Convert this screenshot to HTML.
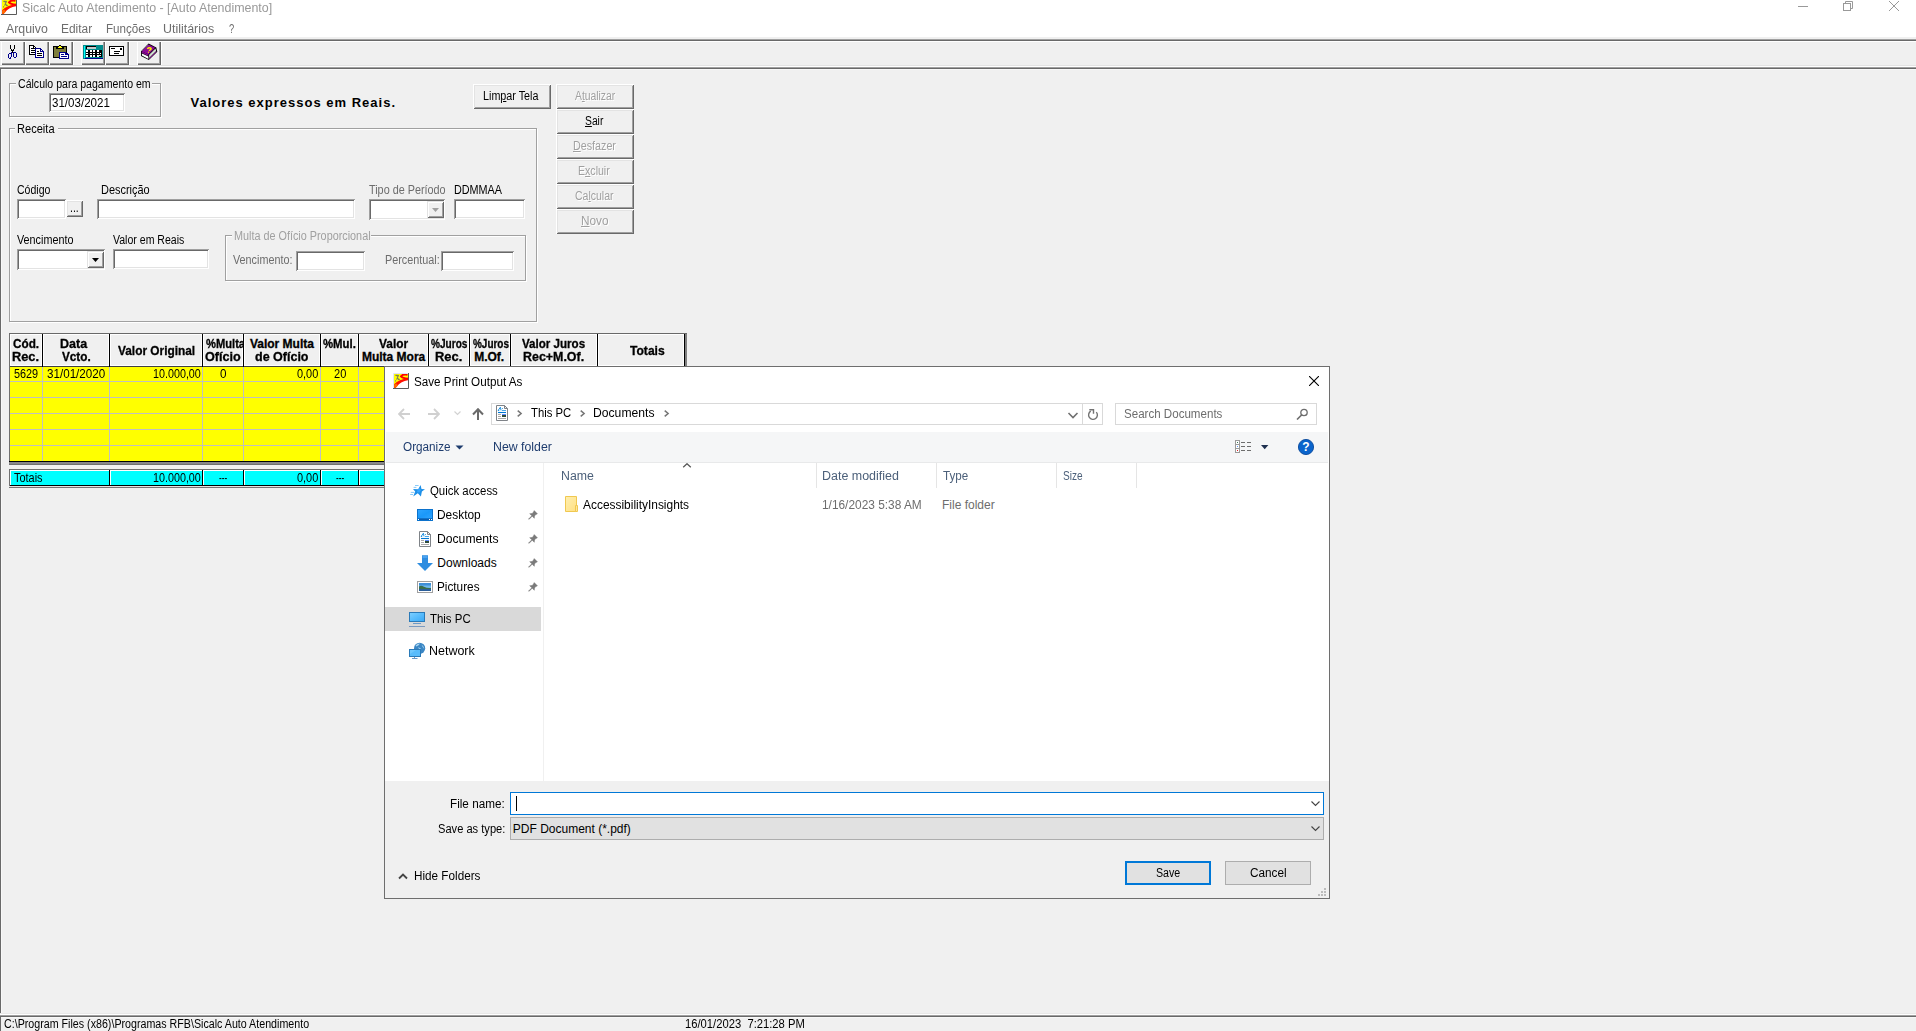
<!DOCTYPE html>
<html><head><meta charset="utf-8"><title>Sicalc Auto Atendimento</title><style>
html,body{margin:0;padding:0}
body{width:1916px;height:1031px;overflow:hidden;background:#f0f0f0;position:relative;font-family:'Liberation Sans',sans-serif;}
#root{position:absolute;left:0;top:0;width:1916px;height:1031px;overflow:hidden}
#root div,#root svg,#root span{position:absolute}
.t{white-space:pre;line-height:1;transform-origin:0 0;color:#000}
u{text-decoration:underline;text-underline-offset:1px}
</style></head><body><div id="root">
<div style="left:0px;top:0px;width:1916px;height:37px;background:#fff;"></div>
<svg style="left:1px;top:-1px;" width="16" height="16" viewBox="0 0 16 16"><rect width="16" height="16" fill="#fff"/><path d="M1 1H15V6.3Q7 7.5 1 13Z" fill="#ffff00"/><path d="M1 15.5V11.2Q6 6.8 15 4.8V7.2Q8 8.2 4 13.2L2.2 15.5Z" fill="#ff1000"/><path d="M1 15V11.5L3.5 10.5L5 12.5L3 14.5Z" fill="#ff6a00"/><path d="M14.5 1.8Q10 0.8 8 3.4Q9.5 5.3 15 5.7" fill="none" stroke="#ff0000" stroke-width="2"/><path d="M2.4 2.4H4.2V3.6M5.6 2L3.6 6.6M4.6 5.4L6.2 6.4L5 6.8M2.6 7.2V8.4" fill="none" stroke="#7f7f55" stroke-width="1.1"/><path d="M0.5 16V0.5H16" fill="none" stroke="#e2e2f8"/><path d="M15.5 0V15.5H0" fill="none" stroke="#5a5a5a"/></svg>
<span class="t" style="left:22.0px;top:2px;font-size:12px;color:#999;transform:scaleX(1.036);">Sicalc Auto Atendimento - [Auto Atendimento]</span>
<svg style="left:1798px;top:0px;" width="10" height="12" viewBox="0 0 10 12"><path d="M0 6.5H10" stroke="#999" stroke-width="1"/></svg>
<svg style="left:1843px;top:0px;" width="11" height="12" viewBox="0 0 11 12"><path d="M2.5 3V1.5H9.5V8.5H8" fill="none" stroke="#999"/><rect x="0.5" y="3.5" width="7" height="7" fill="none" stroke="#999"/></svg>
<svg style="left:1889px;top:0px;" width="11" height="12" viewBox="0 0 11 12"><path d="M0 1L10 11M10 1L0 11" stroke="#999" stroke-width="1"/></svg>
<span class="t" style="left:6.3px;top:23px;font-size:12px;color:#6d6d6d;transform:scaleX(1.026);">Arquivo</span>
<span class="t" style="left:61.0px;top:23px;font-size:12px;color:#6d6d6d;transform:scaleX(0.992);">Editar</span>
<span class="t" style="left:105.5px;top:23px;font-size:12px;color:#6d6d6d;transform:scaleX(0.969);">Funções</span>
<span class="t" style="left:163.0px;top:23px;font-size:12px;color:#6d6d6d;transform:scaleX(1.037);">Utilitários</span>
<span class="t" style="left:228.6px;top:23px;font-size:12px;color:#6d6d6d;transform:scaleX(0.783);">?</span>
<div style="left:0px;top:37px;width:1916px;height:2px;background:#f0f0f0;"></div>
<div style="left:0px;top:39px;width:1916px;height:1px;background:#a0a0a0;"></div>
<div style="left:0px;top:40px;width:1916px;height:1px;background:#696969;"></div>
<div style="left:0px;top:41px;width:1916px;height:1px;background:#fff;"></div>
<div style="left:0px;top:42px;width:1916px;height:23px;background:#f0f0f0;"></div>
<div style="left:0px;top:65px;width:1916px;height:1px;background:#e3e3e3;"></div>
<div style="left:0px;top:66px;width:1916px;height:1px;background:#fff;"></div>
<div style="left:0px;top:67px;width:1916px;height:1px;background:#a0a0a0;"></div>
<div style="left:0px;top:68px;width:1916px;height:1px;background:#696969;"></div>
<div style="left:73px;top:41px;width:1px;height:24px;background:#fff;"></div>
<div style="left:129px;top:41px;width:1px;height:24px;background:#fff;"></div>
<div style="left:161px;top:41px;width:1px;height:24px;background:#fff;"></div>
<div style="left:1px;top:41px;width:24px;height:24px;background:#f0f0f0;box-shadow:inset 1px 1px 0 #fff,inset -1px -1px 0 #696969,inset -2px -2px 0 #a0a0a0;"></div>
<div style="left:25px;top:41px;width:24px;height:24px;background:#f0f0f0;box-shadow:inset 1px 1px 0 #fff,inset -1px -1px 0 #696969,inset -2px -2px 0 #a0a0a0;"></div>
<div style="left:49px;top:41px;width:24px;height:24px;background:#f0f0f0;box-shadow:inset 1px 1px 0 #fff,inset -1px -1px 0 #696969,inset -2px -2px 0 #a0a0a0;"></div>
<div style="left:81px;top:41px;width:24px;height:24px;background:#f0f0f0;box-shadow:inset 1px 1px 0 #fff,inset -1px -1px 0 #696969,inset -2px -2px 0 #a0a0a0;"></div>
<div style="left:105px;top:41px;width:24px;height:24px;background:#f0f0f0;box-shadow:inset 1px 1px 0 #fff,inset -1px -1px 0 #696969,inset -2px -2px 0 #a0a0a0;"></div>
<div style="left:137px;top:41px;width:24px;height:24px;background:#f0f0f0;box-shadow:inset 1px 1px 0 #fff,inset -1px -1px 0 #696969,inset -2px -2px 0 #a0a0a0;"></div>
<svg style="left:0;top:40px" width="180" height="26" viewBox="0 40 180 26"><g shape-rendering="crispEdges"><rect x="10" y="45" width="1" height="4" fill="#000"/><rect x="14" y="45" width="1" height="4" fill="#000"/><rect x="11" y="49" width="1" height="2" fill="#000"/><rect x="13" y="49" width="1" height="2" fill="#000"/><rect x="12" y="50" width="1" height="3" fill="#000"/><rect x="11" y="52" width="1" height="2" fill="#00008b"/><rect x="13" y="52" width="1" height="1" fill="#00008b"/><rect x="9" y="53" width="2" height="1" fill="#00008b"/><rect x="8" y="54" width="1" height="4" fill="#00008b"/><rect x="11" y="54" width="1" height="3" fill="#00008b"/><rect x="9" y="58" width="2" height="1" fill="#00008b"/><rect x="10" y="57" width="1" height="1" fill="#00008b"/><rect x="14" y="52" width="2" height="1" fill="#00008b"/><rect x="13" y="53" width="1" height="4" fill="#00008b"/><rect x="16" y="53" width="1" height="4" fill="#00008b"/><rect x="14" y="57" width="2" height="1" fill="#00008b"/></g><g shape-rendering="crispEdges"><path d="M29.5 45.5H33.5L36.5 48.5V54.5H29.5Z" fill="#fff" stroke="#000"/><path d="M33.5 45.5V48.5H36.5" fill="none" stroke="#000"/><rect x="31" y="48" width="2" height="1" fill="#000"/><rect x="31" y="50" width="4" height="1" fill="#000"/><rect x="31" y="52" width="4" height="1" fill="#000"/><path d="M35.5 48.5H40.5L43.5 51.5V57.5H35.5Z" fill="#fff" stroke="#00008b"/><path d="M40.5 48.5V51.5H43.5" fill="none" stroke="#00008b"/><rect x="37" y="51" width="2" height="1" fill="#000"/><rect x="37" y="53" width="5" height="1" fill="#000"/><rect x="37" y="55" width="5" height="1" fill="#000"/></g><g shape-rendering="crispEdges"><rect x="53.5" y="46.5" width="13" height="11" fill="#7d7d3a" stroke="#000"/><path d="M56.5 48.5V47.5H58.5L59.5 45.5H60.5L61.5 47.5H63.5V48.5Z" fill="#e8e8d0" stroke="#000"/><rect x="59" y="46" width="2" height="1" fill="#ffff00"/><rect x="58" y="47" width="4" height="1" fill="#ffff00"/><path d="M59.5 52.5H65.5L68.5 54.5V58.5H59.5Z" fill="#fff" stroke="#00008b"/><path d="M65.5 52.5V54.5H68.5" fill="none" stroke="#00008b"/><rect x="61" y="54" width="3" height="1" fill="#00008b"/><rect x="61" y="56" width="6" height="1" fill="#00008b"/></g><g shape-rendering="crispEdges"><rect x="83" y="45" width="20" height="13" fill="#008b8b"/><rect x="84" y="46" width="1" height="12" fill="#00ffff"/><rect x="85" y="58" width="18" height="1" fill="#00008b"/><rect x="83" y="58" width="2" height="1" fill="#008b8b"/><rect x="86" y="46" width="10" height="1" fill="#000"/><rect x="86" y="47" width="1" height="2" fill="#000"/><rect x="87" y="47" width="9" height="2" fill="#c8c8c8"/><rect x="86" y="50" width="16" height="7" fill="#000"/><rect x="86" y="50" width="2" height="2" fill="#fff"/><rect x="86" y="53" width="2" height="1" fill="#fff"/><rect x="86" y="55" width="2" height="2" fill="#fff"/><rect x="90" y="50" width="2" height="2" fill="#fff"/><rect x="90" y="53" width="2" height="1" fill="#fff"/><rect x="90" y="55" width="2" height="2" fill="#fff"/><rect x="93" y="50" width="2" height="2" fill="#fff"/><rect x="93" y="53" width="2" height="1" fill="#fff"/><rect x="93" y="55" width="2" height="2" fill="#fff"/><rect x="97" y="50" width="2" height="2" fill="#fff"/><rect x="97" y="53" width="2" height="1" fill="#fff"/><rect x="97" y="55" width="2" height="2" fill="#fff"/><rect x="100" y="53" width="1" height="1" fill="#fff"/><rect x="98" y="55" width="3" height="1" fill="#d8d8d8"/></g><g shape-rendering="crispEdges"><rect x="109.5" y="46.5" width="14" height="9" fill="#fff" stroke="#000"/><rect x="111" y="48" width="4" height="1" fill="#000"/><rect x="120" y="48" width="2" height="2" fill="#000"/><rect x="114" y="51" width="6" height="1" fill="#000"/><rect x="114" y="53" width="5" height="1" fill="#000"/></g><path d="M141 51.2L148.6 43.6L156.3 47.4L157.3 51.8L148.8 60.1L141 56Z" fill="#000"/><path d="M141.7 51.2L148.6 44.5L155.2 47.8L148.4 54.4Z" fill="#8c0a96"/><path d="M141.7 51.2L148.4 54.4V56L141.7 52.8Z" fill="#8c0a96"/><path d="M141.9 53.4L148.4 56.5V58.9L141.9 55.5Z" fill="#fff"/><path d="M149.1 54.7L155.5 48.5L156.1 51L149.1 58Z" fill="#d4dcd4"/><path d="M149 58.9L156.5 51.6" stroke="#8c0a96" stroke-width="0.9" fill="none"/><path d="M142.5 50.3L148.3 44.8" stroke="#cdbdd5" stroke-width="0.8" stroke-dasharray="0.7 0.9" fill="none"/><path d="M147.3 48.9Q148.6 47.3 150.7 48Q151.7 48.9 150.3 49.9L148.9 50.7M148 52.1L148.9 52.4" fill="none" stroke="#ffee00" stroke-width="1.5"/></svg>
<div style="left:0px;top:69px;width:1px;height:944px;background:#696969;"></div>
<div style="left:1px;top:70px;width:1px;height:943px;background:#f8f8f8;"></div>
<div style="left:1px;top:69px;width:1915px;height:1px;background:#f8f8f8;"></div>
<div style="left:0px;top:1013px;width:1916px;height:1px;background:#e8e8e8;"></div>
<div style="left:0px;top:1014px;width:1916px;height:1px;background:#fff;"></div>
<div style="left:0px;top:1015px;width:1916px;height:1px;background:#a0a0a0;"></div>
<div style="left:0px;top:1016px;width:1916px;height:1px;background:#696969;"></div>
<div style="left:0px;top:1017px;width:1px;height:14px;background:#696969;"></div>
<div style="left:1px;top:1017px;width:1915px;height:1px;background:#f8f8f8;"></div>
<span class="t" style="left:3.8px;top:1018px;font-size:12px;transform:scaleX(0.890);">C:\Program Files (x86)\Programas RFB\Sicalc Auto Atendimento</span>
<span class="t" style="left:684.5px;top:1018px;font-size:12px;transform:scaleX(0.935);">16/01/2023  7:21:28 PM</span>
<div style="left:10px;top:84px;width:152px;height:34px;border:1px solid #fff;box-sizing:border-box;"></div>
<div style="left:9px;top:83px;width:152px;height:34px;border:1px solid #a0a0a0;box-sizing:border-box;"></div>
<div style="left:16px;top:78px;width:136px;height:12px;background:#f0f0f0;"></div>
<span class="t" style="left:18.0px;top:78px;font-size:12px;transform:scaleX(0.880);">Cálculo para pagamento em</span>
<div style="left:49px;top:93px;width:76px;height:19px;background:#fff;box-shadow:inset 1px 1px 0 #a0a0a0,inset -1px -1px 0 #fff,inset 2px 2px 0 #696969,inset -2px -2px 0 #e3e3e3;"></div>
<span class="t" style="left:52.1px;top:97px;font-size:12px;transform:scaleX(0.963);">31/03/2021</span>
<span class="t" style="left:190.5px;top:96px;font-size:13px;font-weight:700;letter-spacing:1px">Valores expressos em Reais.</span>
<div style="left:473px;top:84px;width:78px;height:25px;background:#f0f0f0;box-shadow:inset 1px 1px 0 #fff,inset -1px -1px 0 #696969,inset 2px 2px 0 #e3e3e3,inset -2px -2px 0 #a0a0a0;"></div>
<span class="t" style="left:483.4px;top:90px;font-size:12px;transform:scaleX(0.897);">Lim<u>p</u>ar Tela</span>
<div style="left:556px;top:84px;width:78px;height:25px;background:#f0f0f0;box-shadow:inset 1px 1px 0 #fff,inset -1px -1px 0 #696969,inset 2px 2px 0 #e3e3e3,inset -2px -2px 0 #a0a0a0;"></div>
<span class="t" style="left:574.5px;top:90px;font-size:12px;color:#a0a0a0;transform:scaleX(0.860);text-shadow:1px 1px 0 #fff;">A<u>t</u>ualizar</span>
<div style="left:556px;top:109px;width:78px;height:25px;background:#f0f0f0;box-shadow:inset 1px 1px 0 #fff,inset -1px -1px 0 #696969,inset 2px 2px 0 #e3e3e3,inset -2px -2px 0 #a0a0a0;"></div>
<span class="t" style="left:585.2px;top:115px;font-size:12px;transform:scaleX(0.858);"><u>S</u>air</span>
<div style="left:556px;top:134px;width:78px;height:25px;background:#f0f0f0;box-shadow:inset 1px 1px 0 #fff,inset -1px -1px 0 #696969,inset 2px 2px 0 #e3e3e3,inset -2px -2px 0 #a0a0a0;"></div>
<span class="t" style="left:572.7px;top:140px;font-size:12px;color:#a0a0a0;transform:scaleX(0.894);text-shadow:1px 1px 0 #fff;"><u>D</u>esfazer</span>
<div style="left:556px;top:159px;width:78px;height:25px;background:#f0f0f0;box-shadow:inset 1px 1px 0 #fff,inset -1px -1px 0 #696969,inset 2px 2px 0 #e3e3e3,inset -2px -2px 0 #a0a0a0;"></div>
<span class="t" style="left:578.3px;top:165px;font-size:12px;color:#a0a0a0;transform:scaleX(0.881);text-shadow:1px 1px 0 #fff;">E<u>x</u>cluir</span>
<div style="left:556px;top:184px;width:78px;height:25px;background:#f0f0f0;box-shadow:inset 1px 1px 0 #fff,inset -1px -1px 0 #696969,inset 2px 2px 0 #e3e3e3,inset -2px -2px 0 #a0a0a0;"></div>
<span class="t" style="left:575.2px;top:190px;font-size:12px;color:#a0a0a0;transform:scaleX(0.874);text-shadow:1px 1px 0 #fff;">Ca<u>l</u>cular</span>
<div style="left:556px;top:209px;width:78px;height:25px;background:#f0f0f0;box-shadow:inset 1px 1px 0 #fff,inset -1px -1px 0 #696969,inset 2px 2px 0 #e3e3e3,inset -2px -2px 0 #a0a0a0;"></div>
<span class="t" style="left:580.5px;top:215px;font-size:12px;color:#a0a0a0;transform:scaleX(0.981);text-shadow:1px 1px 0 #fff;"><u>N</u>ovo</span>
<div style="left:10px;top:129px;width:528px;height:194px;border:1px solid #fff;box-sizing:border-box;"></div>
<div style="left:9px;top:128px;width:528px;height:194px;border:1px solid #a0a0a0;box-sizing:border-box;"></div>
<div style="left:15px;top:123px;width:43px;height:12px;background:#f0f0f0;"></div>
<span class="t" style="left:17.4px;top:123px;font-size:12px;transform:scaleX(0.923);">Receita</span>
<span class="t" style="left:17.1px;top:184px;font-size:12px;transform:scaleX(0.878);">Código</span>
<div style="left:17px;top:199px;width:49px;height:20px;background:#fff;box-shadow:inset 1px 1px 0 #a0a0a0,inset -1px -1px 0 #fff,inset 2px 2px 0 #696969,inset -2px -2px 0 #e3e3e3;"></div>
<div style="left:66px;top:200px;width:17px;height:17px;background:#f0f0f0;box-shadow:inset 1px 1px 0 #fff,inset -1px -1px 0 #696969,inset 2px 2px 0 #e3e3e3,inset -2px -2px 0 #a0a0a0;"></div>
<span class="t" style="left:70.1px;top:202px;font-size:12px;transform:scaleX(0.875);">...</span>
<span class="t" style="left:100.6px;top:184px;font-size:12px;transform:scaleX(0.913);">Descrição</span>
<div style="left:97px;top:199px;width:258px;height:20px;background:#fff;box-shadow:inset 1px 1px 0 #a0a0a0,inset -1px -1px 0 #fff,inset 2px 2px 0 #696969,inset -2px -2px 0 #e3e3e3;"></div>
<span class="t" style="left:368.6px;top:184px;font-size:12px;color:#6d6d6d;transform:scaleX(0.902);">Tipo de Período</span>
<div style="left:369px;top:199px;width:76px;height:21px;background:#fff;box-shadow:inset 1px 1px 0 #a0a0a0,inset -1px -1px 0 #fff,inset 2px 2px 0 #696969,inset -2px -2px 0 #e3e3e3;"></div>
<div style="left:427px;top:201px;width:17px;height:17px;background:#f0f0f0;box-shadow:inset 1px 1px 0 #e3e3e3,inset -1px -1px 0 #696969,inset 2px 2px 0 #fff,inset -2px -2px 0 #a0a0a0;"></div>
<svg style="left:432px;top:208px;" width="7" height="4" viewBox="0 0 7 4"><path d="M0 0H7L3.5 4Z" fill="#a0a0a0"/></svg>
<span class="t" style="left:454.1px;top:184px;font-size:12px;transform:scaleX(0.900);">DDMMAA</span>
<div style="left:454px;top:199px;width:71px;height:20px;background:#fff;box-shadow:inset 1px 1px 0 #a0a0a0,inset -1px -1px 0 #fff,inset 2px 2px 0 #696969,inset -2px -2px 0 #e3e3e3;"></div>
<span class="t" style="left:17.0px;top:234px;font-size:12px;transform:scaleX(0.900);">Vencimento</span>
<div style="left:17px;top:249px;width:88px;height:21px;background:#fff;box-shadow:inset 1px 1px 0 #a0a0a0,inset -1px -1px 0 #fff,inset 2px 2px 0 #696969,inset -2px -2px 0 #e3e3e3;"></div>
<div style="left:87px;top:251px;width:17px;height:17px;background:#f0f0f0;box-shadow:inset 1px 1px 0 #e3e3e3,inset -1px -1px 0 #696969,inset 2px 2px 0 #fff,inset -2px -2px 0 #a0a0a0;"></div>
<svg style="left:92px;top:258px;" width="7" height="4" viewBox="0 0 7 4"><path d="M0 0H7L3.5 4Z" fill="#000"/></svg>
<span class="t" style="left:113.0px;top:234px;font-size:12px;transform:scaleX(0.879);">Valor em Reais</span>
<div style="left:113px;top:249px;width:96px;height:20px;background:#fff;box-shadow:inset 1px 1px 0 #a0a0a0,inset -1px -1px 0 #fff,inset 2px 2px 0 #696969,inset -2px -2px 0 #e3e3e3;"></div>
<div style="left:226px;top:236px;width:301px;height:46px;border:1px solid #fff;box-sizing:border-box;"></div>
<div style="left:225px;top:235px;width:301px;height:46px;border:1px solid #a0a0a0;box-sizing:border-box;"></div>
<div style="left:232px;top:230px;width:139px;height:12px;background:#f0f0f0;"></div>
<span class="t" style="left:233.6px;top:230px;font-size:12px;color:#a0a0a0;transform:scaleX(0.902);">Multa de Ofício Proporcional</span>
<span class="t" style="left:232.7px;top:254px;font-size:12px;color:#6d6d6d;transform:scaleX(0.900);">Vencimento:</span>
<div style="left:296px;top:251px;width:69px;height:20px;background:#fff;box-shadow:inset 1px 1px 0 #a0a0a0,inset -1px -1px 0 #fff,inset 2px 2px 0 #696969,inset -2px -2px 0 #e3e3e3;"></div>
<span class="t" style="left:384.6px;top:254px;font-size:12px;color:#6d6d6d;transform:scaleX(0.902);">Percentual:</span>
<div style="left:441px;top:251px;width:73px;height:20px;background:#fff;box-shadow:inset 1px 1px 0 #a0a0a0,inset -1px -1px 0 #fff,inset 2px 2px 0 #696969,inset -2px -2px 0 #e3e3e3;"></div>
<div style="left:9px;top:333px;width:678px;height:1px;background:#696969;"></div>
<div style="left:9px;top:334px;width:1px;height:131px;background:#707070;"></div>
<div style="left:10px;top:334px;width:674px;height:32px;background:#f0f0f0;"></div>
<div style="left:10px;top:334px;width:674px;height:1px;background:#fff;"></div>
<div style="left:10px;top:365px;width:674px;height:1px;background:#fff;"></div>
<div style="left:10px;top:334px;width:1px;height:32px;background:#fff;"></div>
<div style="left:10px;top:366px;width:675px;height:1px;background:#404040;"></div>
<div style="left:41px;top:334px;width:1px;height:32px;background:#fff;"></div>
<div style="left:43px;top:334px;width:1px;height:32px;background:#fff;"></div>
<div style="left:42px;top:334px;width:1px;height:33px;background:#000;"></div>
<div style="left:108px;top:334px;width:1px;height:32px;background:#fff;"></div>
<div style="left:110px;top:334px;width:1px;height:32px;background:#fff;"></div>
<div style="left:109px;top:334px;width:1px;height:33px;background:#000;"></div>
<div style="left:201px;top:334px;width:1px;height:32px;background:#fff;"></div>
<div style="left:203px;top:334px;width:1px;height:32px;background:#fff;"></div>
<div style="left:202px;top:334px;width:1px;height:33px;background:#000;"></div>
<div style="left:242px;top:334px;width:1px;height:32px;background:#fff;"></div>
<div style="left:244px;top:334px;width:1px;height:32px;background:#fff;"></div>
<div style="left:243px;top:334px;width:1px;height:33px;background:#000;"></div>
<div style="left:319px;top:334px;width:1px;height:32px;background:#fff;"></div>
<div style="left:321px;top:334px;width:1px;height:32px;background:#fff;"></div>
<div style="left:320px;top:334px;width:1px;height:33px;background:#000;"></div>
<div style="left:357px;top:334px;width:1px;height:32px;background:#fff;"></div>
<div style="left:359px;top:334px;width:1px;height:32px;background:#fff;"></div>
<div style="left:358px;top:334px;width:1px;height:33px;background:#000;"></div>
<div style="left:427px;top:334px;width:1px;height:32px;background:#fff;"></div>
<div style="left:429px;top:334px;width:1px;height:32px;background:#fff;"></div>
<div style="left:428px;top:334px;width:1px;height:33px;background:#000;"></div>
<div style="left:468px;top:334px;width:1px;height:32px;background:#fff;"></div>
<div style="left:470px;top:334px;width:1px;height:32px;background:#fff;"></div>
<div style="left:469px;top:334px;width:1px;height:33px;background:#000;"></div>
<div style="left:509px;top:334px;width:1px;height:32px;background:#fff;"></div>
<div style="left:511px;top:334px;width:1px;height:32px;background:#fff;"></div>
<div style="left:510px;top:334px;width:1px;height:33px;background:#000;"></div>
<div style="left:596px;top:334px;width:1px;height:32px;background:#fff;"></div>
<div style="left:598px;top:334px;width:1px;height:32px;background:#fff;"></div>
<div style="left:597px;top:334px;width:1px;height:33px;background:#000;"></div>
<div style="left:683px;top:334px;width:1px;height:32px;background:#fff;"></div>
<div style="left:684px;top:334px;width:1px;height:33px;background:#000;"></div>
<div style="left:685px;top:334px;width:2px;height:33px;background:#808080;"></div>
<div style="left:10px;top:367px;width:676px;height:94px;background:#ffff00;"></div>
<div style="left:10px;top:381px;width:676px;height:1px;background:#c0c0c0;"></div>
<div style="left:10px;top:397px;width:676px;height:1px;background:#c0c0c0;"></div>
<div style="left:10px;top:413px;width:676px;height:1px;background:#c0c0c0;"></div>
<div style="left:10px;top:429px;width:676px;height:1px;background:#c0c0c0;"></div>
<div style="left:10px;top:445px;width:676px;height:1px;background:#c0c0c0;"></div>
<div style="left:42px;top:367px;width:1px;height:94px;background:#c0c0c0;"></div>
<div style="left:109px;top:367px;width:1px;height:94px;background:#c0c0c0;"></div>
<div style="left:202px;top:367px;width:1px;height:94px;background:#c0c0c0;"></div>
<div style="left:243px;top:367px;width:1px;height:94px;background:#c0c0c0;"></div>
<div style="left:320px;top:367px;width:1px;height:94px;background:#c0c0c0;"></div>
<div style="left:358px;top:367px;width:1px;height:94px;background:#c0c0c0;"></div>
<div style="left:428px;top:367px;width:1px;height:94px;background:#c0c0c0;"></div>
<div style="left:469px;top:367px;width:1px;height:94px;background:#c0c0c0;"></div>
<div style="left:510px;top:367px;width:1px;height:94px;background:#c0c0c0;"></div>
<div style="left:597px;top:367px;width:1px;height:94px;background:#c0c0c0;"></div>
<div style="left:9px;top:461px;width:677px;height:1px;background:#000;"></div>
<div style="left:9px;top:462px;width:677px;height:2px;background:#888888;"></div>
<div style="left:9px;top:464px;width:677px;height:1px;background:#707070;"></div>
<span class="t" style="left:13.0px;top:338px;font-size:12px;font-weight:700;-webkit-text-stroke:0.3px #000;transform:scaleX(0.978);">Cód.</span>
<span class="t" style="left:12.1px;top:351px;font-size:12px;font-weight:700;-webkit-text-stroke:0.3px #000;transform:scaleX(1.065);">Rec.</span>
<span class="t" style="left:60.0px;top:338px;font-size:12px;font-weight:700;-webkit-text-stroke:0.3px #000;transform:scaleX(1.042);">Data</span>
<span class="t" style="left:62.3px;top:351px;font-size:12px;font-weight:700;-webkit-text-stroke:0.3px #000;transform:scaleX(0.979);">Vcto.</span>
<span class="t" style="left:117.8px;top:345px;font-size:12px;font-weight:700;-webkit-text-stroke:0.3px #000;transform:scaleX(0.989);">Valor Original</span>
<div style="left:203px;top:336px;width:40px;height:16px;overflow:hidden"><span class="t" style="left:2.7px;top:2px;font-size:12px;font-weight:700;-webkit-text-stroke:0.3px #000;transform:scaleX(0.93)">%Multa</span></div>
<span class="t" style="left:205.2px;top:351px;font-size:12px;font-weight:700;-webkit-text-stroke:0.3px #000;transform:scaleX(1.052);">Ofício</span>
<span class="t" style="left:249.9px;top:338px;font-size:12px;font-weight:700;-webkit-text-stroke:0.3px #000;">Valor Multa</span>
<span class="t" style="left:254.9px;top:351px;font-size:12px;font-weight:700;-webkit-text-stroke:0.3px #000;transform:scaleX(1.042);">de Ofício</span>
<span class="t" style="left:323.4px;top:338px;font-size:12px;font-weight:700;-webkit-text-stroke:0.3px #000;transform:scaleX(0.946);">%Mul.</span>
<span class="t" style="left:378.9px;top:338px;font-size:12px;font-weight:700;-webkit-text-stroke:0.3px #000;transform:scaleX(0.991);">Valor</span>
<span class="t" style="left:361.9px;top:351px;font-size:12px;font-weight:700;-webkit-text-stroke:0.3px #000;">Multa Mora</span>
<span class="t" style="left:431.3px;top:338px;font-size:12px;font-weight:700;-webkit-text-stroke:0.3px #000;transform:scaleX(0.840);">%Juros</span>
<span class="t" style="left:434.9px;top:351px;font-size:12px;font-weight:700;-webkit-text-stroke:0.3px #000;transform:scaleX(1.074);">Rec.</span>
<span class="t" style="left:472.7px;top:338px;font-size:12px;font-weight:700;-webkit-text-stroke:0.3px #000;transform:scaleX(0.830);">%Juros</span>
<span class="t" style="left:474.2px;top:351px;font-size:12px;font-weight:700;-webkit-text-stroke:0.3px #000;">M.Of.</span>
<span class="t" style="left:522.3px;top:338px;font-size:12px;font-weight:700;-webkit-text-stroke:0.3px #000;transform:scaleX(0.965);">Valor Juros</span>
<span class="t" style="left:523.0px;top:351px;font-size:12px;font-weight:700;-webkit-text-stroke:0.3px #000;transform:scaleX(1.035);">Rec+M.Of.</span>
<span class="t" style="left:630.0px;top:345px;font-size:12px;font-weight:700;-webkit-text-stroke:0.3px #000;transform:scaleX(1.007);">Totais</span>
<span class="t" style="left:14.2px;top:368px;font-size:12px;transform:scaleX(0.905);">5629</span>
<span class="t" style="left:46.9px;top:368px;font-size:12px;transform:scaleX(0.969);">31/01/2020</span>
<span class="t" style="left:152.8px;top:368px;font-size:12px;transform:scaleX(0.896);">10.000,00</span>
<span class="t" style="left:219.5px;top:368px;font-size:12px;transform:scaleX(0.974);">0</span>
<span class="t" style="left:296.6px;top:368px;font-size:12px;transform:scaleX(0.911);">0,00</span>
<span class="t" style="left:334.3px;top:368px;font-size:12px;transform:scaleX(0.920);">20</span>
<div style="left:9px;top:469px;width:677px;height:1px;background:#707070;"></div>
<div style="left:9px;top:469px;width:1px;height:19px;background:#707070;"></div>
<div style="left:10px;top:470px;width:676px;height:1px;background:#fff;"></div>
<div style="left:10px;top:471px;width:1px;height:14px;background:#fff;"></div>
<div style="left:11px;top:471px;width:675px;height:14px;background:#00ffff;"></div>
<div style="left:10px;top:485px;width:676px;height:1px;background:#000;"></div>
<div style="left:9px;top:486px;width:677px;height:1px;background:#e3e3e3;"></div>
<div style="left:9px;top:487px;width:677px;height:1px;background:#747474;"></div>
<div style="left:109px;top:470px;width:1px;height:15px;background:#000;"></div>
<div style="left:110px;top:471px;width:1px;height:14px;background:#fff;"></div>
<div style="left:202px;top:470px;width:1px;height:15px;background:#000;"></div>
<div style="left:203px;top:471px;width:1px;height:14px;background:#fff;"></div>
<div style="left:243px;top:470px;width:1px;height:15px;background:#000;"></div>
<div style="left:244px;top:471px;width:1px;height:14px;background:#fff;"></div>
<div style="left:320px;top:470px;width:1px;height:15px;background:#000;"></div>
<div style="left:321px;top:471px;width:1px;height:14px;background:#fff;"></div>
<div style="left:358px;top:470px;width:1px;height:15px;background:#000;"></div>
<div style="left:359px;top:471px;width:1px;height:14px;background:#fff;"></div>
<div style="left:428px;top:470px;width:1px;height:15px;background:#000;"></div>
<div style="left:429px;top:471px;width:1px;height:14px;background:#fff;"></div>
<div style="left:469px;top:470px;width:1px;height:15px;background:#000;"></div>
<div style="left:470px;top:471px;width:1px;height:14px;background:#fff;"></div>
<div style="left:510px;top:470px;width:1px;height:15px;background:#000;"></div>
<div style="left:511px;top:471px;width:1px;height:14px;background:#fff;"></div>
<div style="left:597px;top:470px;width:1px;height:15px;background:#000;"></div>
<div style="left:598px;top:471px;width:1px;height:14px;background:#fff;"></div>
<span class="t" style="left:13.8px;top:472px;font-size:12px;transform:scaleX(0.911);">Totais</span>
<span class="t" style="left:152.8px;top:472px;font-size:12px;transform:scaleX(0.896);">10.000,00</span>
<span class="t" style="left:219.2px;top:472px;font-size:12px;transform:scaleX(0.682);">---</span>
<span class="t" style="left:296.6px;top:472px;font-size:12px;transform:scaleX(0.911);">0,00</span>
<span class="t" style="left:336.2px;top:472px;font-size:12px;transform:scaleX(0.682);">---</span>
<div style="left:384px;top:366px;width:946px;height:533px;background:#fff;border:1px solid #6e6e6e;box-sizing:border-box;"></div>
<div style="left:386px;top:432px;width:942px;height:30px;background:#f5f6f7;"></div>
<div style="left:386px;top:462px;width:942px;height:1px;background:#e8e9ea;"></div>
<div style="left:385px;top:781px;width:944px;height:117px;background:#f0f0f0;"></div>
<svg style="left:393px;top:373px;" width="16" height="16" viewBox="0 0 16 16"><rect width="16" height="16" fill="#fff"/><path d="M1 1H15V6.3Q7 7.5 1 13Z" fill="#ffff00"/><path d="M1 15.5V11.2Q6 6.8 15 4.8V7.2Q8 8.2 4 13.2L2.2 15.5Z" fill="#ff1000"/><path d="M1 15V11.5L3.5 10.5L5 12.5L3 14.5Z" fill="#ff6a00"/><path d="M14.5 1.8Q10 0.8 8 3.4Q9.5 5.3 15 5.7" fill="none" stroke="#ff0000" stroke-width="2"/><path d="M2.4 2.4H4.2V3.6M5.6 2L3.6 6.6M4.6 5.4L6.2 6.4L5 6.8M2.6 7.2V8.4" fill="none" stroke="#7f7f55" stroke-width="1.1"/><path d="M0.5 16V0.5H16" fill="none" stroke="#e2e2f8"/><path d="M15.5 0V15.5H0" fill="none" stroke="#5a5a5a"/></svg>
<span class="t" style="left:414.1px;top:376px;font-size:12px;transform:scaleX(0.973);">Save Print Output As</span>
<svg style="left:1309px;top:376px;" width="10" height="10" viewBox="0 0 10 10"><path d="M0 0L10 10M10 0L0 10" stroke="#000" stroke-width="1.1"/></svg>
<svg style="left:398px;top:408px;" width="13" height="12" viewBox="0 0 13 12"><path d="M12 6H1.5M6 1L1 6L6 11" fill="none" stroke="#d0d0d0" stroke-width="1.8"/></svg>
<svg style="left:427px;top:408px;" width="13" height="12" viewBox="0 0 13 12"><path d="M1 6H11.5M7 1L12 6L7 11" fill="none" stroke="#d0d0d0" stroke-width="1.8"/></svg>
<svg style="left:454px;top:411px;" width="7" height="5" viewBox="0 0 7 5"><path d="M0.5 0.5L3.5 3.5L6.5 0.5" fill="none" stroke="#d2d2d2" stroke-width="1.2"/></svg>
<svg style="left:472px;top:408px;" width="12" height="12" viewBox="0 0 12 12"><path d="M6 12V1.5M1 6.5L6 1.2L11 6.5" fill="none" stroke="#6a6a6a" stroke-width="2"/></svg>
<div style="left:491px;top:403px;width:612px;height:22px;background:#fff;border:1px solid #d9d9d9;box-sizing:border-box;"></div>
<div style="left:1082px;top:404px;width:1px;height:20px;background:#d9d9d9;"></div>
<svg style="left:496px;top:405px;" width="12" height="16" viewBox="0 0 12 16"><path d="M0.5 0.5H8.5L11.5 3.5V15.5H0.5Z" fill="#fff" stroke="#7f8388"/><path d="M8.5 0.5V3.5H11.5Z" fill="#f2f2f2" stroke="#7f8388"/><path d="M2.2 5.4L4.4 2.2L5 5.4M2 5.5H3.2" stroke="#1e90e0" stroke-width="1" fill="none"/><path d="M6 3.5H7" stroke="#4aa8e8"/><path d="M6 5.5H10" stroke="#4aa8e8"/><path d="M2 7.5H10" stroke="#0078d4" stroke-width="1.1"/><path d="M2 9.5H5M2 11.5H5M2 13.5H10" stroke="#a8a8a8"/><rect x="6" y="9" width="4" height="1" fill="#5a8aff"/><rect x="6" y="10" width="4" height="2" fill="#2a4a3a"/></svg>
<svg style="left:517px;top:410px;" width="6" height="7" viewBox="0 0 6 7"><path d="M0.7 0.7L4.1 3.5L0.7 6.3" fill="none" stroke="#757575" stroke-width="1.5"/></svg>
<span class="t" style="left:530.8px;top:407px;font-size:12px;transform:scaleX(0.940);">This PC</span>
<svg style="left:580px;top:410px;" width="6" height="7" viewBox="0 0 6 7"><path d="M0.7 0.7L4.1 3.5L0.7 6.3" fill="none" stroke="#757575" stroke-width="1.5"/></svg>
<span class="t" style="left:593.0px;top:407px;font-size:12px;transform:scaleX(1.013);">Documents</span>
<svg style="left:664px;top:410px;" width="6" height="7" viewBox="0 0 6 7"><path d="M0.7 0.7L4.1 3.5L0.7 6.3" fill="none" stroke="#757575" stroke-width="1.5"/></svg>
<svg style="left:1067px;top:411px;" width="12" height="8" viewBox="0 0 12 8"><path d="M1.5 2L6 6.5L10.5 2" fill="none" stroke="#707070" stroke-width="1.6"/></svg>
<svg style="left:1086px;top:407px;" width="14" height="14" viewBox="0 0 14 14"><path d="M10.3 5.1A4.4 4.4 0 1 1 4.8 4.2" fill="none" stroke="#737373" stroke-width="1.4"/><path d="M3.3 2.7H7.5V6.8" fill="none" stroke="#737373" stroke-width="1.4"/></svg>
<div style="left:1115px;top:403px;width:202px;height:22px;background:#fff;border:1px solid #d9d9d9;box-sizing:border-box;"></div>
<span class="t" style="left:1123.9px;top:408px;font-size:12px;color:#6d6d6d;transform:scaleX(0.964);">Search Documents</span>
<svg style="left:1296px;top:408px;" width="13" height="12" viewBox="0 0 13 12"><circle cx="8" cy="4.5" r="3.2" fill="none" stroke="#6d6d6d" stroke-width="1.3"/><path d="M5.8 6.8L1 11.5" stroke="#6d6d6d" stroke-width="1.6"/></svg>
<span class="t" style="left:402.8px;top:441px;font-size:12px;color:#1e3c6e;transform:scaleX(0.978);">Organize</span>
<svg style="left:455px;top:445px;" width="9" height="5" viewBox="0 0 9 5"><path d="M0.5 0.5H8.5L4.5 4.5Z" fill="#1e3c6e"/></svg>
<span class="t" style="left:493.0px;top:441px;font-size:12px;color:#1e3c6e;transform:scaleX(1.026);">New folder</span>
<svg style="left:1235px;top:440px;" width="17" height="13" viewBox="0 0 17 13"><g shape-rendering="crispEdges"><rect x="0.5" y="0.5" width="4" height="12" fill="#fff" stroke="#9a9a9a"/><path d="M1 4.5H4M1 8.5H4" stroke="#9a9a9a"/><rect x="2" y="2" width="1" height="1" fill="#3a7a5a"/><rect x="2" y="6" width="1" height="1" fill="#5a9aff"/><rect x="2" y="10" width="1" height="1" fill="#e02020"/><path d="M6 2.5H10M12 2.5H16M6 6.5H10M12 6.5H16M6 10.5H10M12 10.5H16" stroke="#6d6d6d"/></g></svg>
<svg style="left:1261px;top:445px;" width="8" height="5" viewBox="0 0 8 5"><path d="M0 0H7.4L3.7 4.2Z" fill="#1e3050"/></svg>
<svg style="left:1298px;top:439px;" width="16" height="16" viewBox="0 0 16 16"><circle cx="8" cy="8" r="7.6" fill="#0a64cc" stroke="#0a4a9c" stroke-width="0.9"/><text x="8" y="12.3" text-anchor="middle" font-family="Liberation Sans,sans-serif" font-size="12" font-weight="700" fill="#fff">?</text></svg>
<div style="left:543px;top:463px;width:1px;height:318px;background:#f0f0f0;"></div>
<div style="left:385px;top:607px;width:156px;height:24px;background:#d9d9d9;"></div>
<svg style="left:408px;top:482px;" width="20" height="18" viewBox="408 482 20 18"><path d="M420.6 485L421.5 489L425 489.3L421.9 491.6L420.9 496.4L417.8 493.3L413.2 496.6L415.2 491.6L413 489L418.2 489.2Z" fill="#1e90e8"/><path d="M419.9 488L420.6 490.2L419.5 492.5L417 492.2L417.5 490Z" fill="#35a5ff"/><path d="M415 485.5H418.6M413.6 487.4H416.4M410.8 492.4H414.2M410.2 494.5H413" stroke="#7cc4f8" stroke-width="0.9"/></svg>
<svg style="left:417px;top:509px;" width="16" height="12" viewBox="0 0 16 12"><defs><linearGradient id="gd" x1="0" y1="0" x2="1" y2="1"><stop offset="0" stop-color="#2ea4ff"/><stop offset="0.5" stop-color="#1a98fa"/><stop offset="1" stop-color="#2ea4ff"/></linearGradient></defs><rect x="0" y="0" width="16" height="12" fill="#0c72cc"/><rect x="1" y="1" width="14" height="8.5" fill="url(#gd)"/><rect x="1" y="9.5" width="14" height="1.5" fill="#0a5cae"/><rect x="1" y="10" width="1" height="1" fill="#fff"/><rect x="12" y="10" width="1" height="1" fill="#fff"/><rect x="14" y="10" width="1" height="1" fill="#fff"/></svg>
<svg style="left:419px;top:531px;" width="12" height="16" viewBox="0 0 12 16"><path d="M0.5 0.5H8.5L11.5 3.5V15.5H0.5Z" fill="#fff" stroke="#7f8388"/><path d="M8.5 0.5V3.5H11.5Z" fill="#f2f2f2" stroke="#7f8388"/><path d="M2.2 5.4L4.4 2.2L5 5.4M2 5.5H3.2" stroke="#1e90e0" stroke-width="1" fill="none"/><path d="M6 3.5H7" stroke="#4aa8e8"/><path d="M6 5.5H10" stroke="#4aa8e8"/><path d="M2 7.5H10" stroke="#0078d4" stroke-width="1.1"/><path d="M2 9.5H5M2 11.5H5M2 13.5H10" stroke="#a8a8a8"/><rect x="6" y="9" width="4" height="1" fill="#5a8aff"/><rect x="6" y="10" width="4" height="2" fill="#2a4a3a"/></svg>
<svg style="left:417px;top:555px;" width="16" height="16" viewBox="0 0 16 16"><path d="M5 0.3H11V8H16L8 16L0 8H5Z" fill="#2e8de0"/><path d="M5.6 0.8H10.4V3H5.6Z" fill="#4aa2f0"/></svg>
<svg style="left:417px;top:581px;" width="16" height="12" viewBox="0 0 16 12"><rect x="0.5" y="0.5" width="15" height="11" fill="#fff" stroke="#a0a0a0"/><rect x="2" y="2" width="12" height="8" fill="#6fb8ee"/><rect x="2" y="2" width="12" height="2.5" fill="#3f8fd8"/><path d="M2 8V5.5Q4 4 7 5.8Q10 7.4 14 7V8Z" fill="#3a6e4a"/><rect x="2" y="8" width="12" height="2" fill="#2a5e9a"/></svg>
<svg style="left:528px;top:510px;" width="10" height="10" viewBox="0 0 10 10"><path d="M6.2 0.6L9.4 3.8L7.9 4.5L6.5 5.9L6.3 8.3L4.2 6.2L1 9.4L0.6 9L3.8 5.8L1.7 3.7L4.1 3.5L5.5 2.1Z" fill="#7a7a7a" stroke="#7a7a7a" stroke-width="0.5"/></svg>
<svg style="left:528px;top:534px;" width="10" height="10" viewBox="0 0 10 10"><path d="M6.2 0.6L9.4 3.8L7.9 4.5L6.5 5.9L6.3 8.3L4.2 6.2L1 9.4L0.6 9L3.8 5.8L1.7 3.7L4.1 3.5L5.5 2.1Z" fill="#7a7a7a" stroke="#7a7a7a" stroke-width="0.5"/></svg>
<svg style="left:528px;top:558px;" width="10" height="10" viewBox="0 0 10 10"><path d="M6.2 0.6L9.4 3.8L7.9 4.5L6.5 5.9L6.3 8.3L4.2 6.2L1 9.4L0.6 9L3.8 5.8L1.7 3.7L4.1 3.5L5.5 2.1Z" fill="#7a7a7a" stroke="#7a7a7a" stroke-width="0.5"/></svg>
<svg style="left:528px;top:582px;" width="10" height="10" viewBox="0 0 10 10"><path d="M6.2 0.6L9.4 3.8L7.9 4.5L6.5 5.9L6.3 8.3L4.2 6.2L1 9.4L0.6 9L3.8 5.8L1.7 3.7L4.1 3.5L5.5 2.1Z" fill="#7a7a7a" stroke="#7a7a7a" stroke-width="0.5"/></svg>
<svg style="left:409px;top:612px;" width="16" height="16" viewBox="0 0 16 16"><defs><linearGradient id="gp" x1="0" y1="0" x2="1" y2="1"><stop offset="0" stop-color="#7fd0ff"/><stop offset="0.5" stop-color="#58bcfc"/><stop offset="1" stop-color="#3aa8f4"/></linearGradient></defs><rect x="0.5" y="0.5" width="15" height="9" fill="url(#gp)" stroke="#2a7ab8"/><path d="M4 11.5H12" stroke="#6a9ac8" stroke-width="1"/><path d="M0 14.5H16" stroke="#7a9ac0" stroke-width="1"/></svg>
<svg style="left:409px;top:642px;" width="17" height="18" viewBox="0 0 17 18"><circle cx="10.6" cy="6.3" r="5.6" fill="#3a86c4"/><path d="M6.5 3.5Q8.5 1.5 11 1.6Q10 3.5 7.5 4.5ZM12.5 2.5Q15 4 15.3 7Q13.5 5.5 12.5 2.5ZM9 5.5Q11 5 12 7Q10 7.5 9 5.5Z" fill="#a8d4f0"/><rect x="0.5" y="7.5" width="11" height="7" fill="#58bcfc" stroke="#2a7ab8"/><path d="M1 8H7L1 12Z" fill="#7fd0ff" opacity="0.6"/><path d="M5.5 15V16M3 16.5H8.5" stroke="#6a9ac8" stroke-width="1"/></svg>
<svg style="left:565px;top:496px;" width="14" height="16" viewBox="0 0 14 16"><defs><linearGradient id="gf" x1="0" y1="0" x2="1" y2="1"><stop offset="0" stop-color="#ffefb0"/><stop offset="1" stop-color="#ffe083"/></linearGradient></defs><path d="M0.5 0.5H11.5V15.5H0.5Z" fill="url(#gf)" stroke="#f0c850"/><path d="M10.5 9.5H12.5V15.5H10.5Z" fill="#ffe69a" stroke="#f0c850"/></svg>
<span class="t" style="left:430.0px;top:485px;font-size:12px;transform:scaleX(0.950);">Quick access</span>
<span class="t" style="left:437.3px;top:509px;font-size:12px;transform:scaleX(0.993);">Desktop</span>
<span class="t" style="left:437.3px;top:533px;font-size:12px;transform:scaleX(1.013);">Documents</span>
<span class="t" style="left:437.3px;top:557px;font-size:12px;">Downloads</span>
<span class="t" style="left:437.3px;top:581px;font-size:12px;transform:scaleX(0.981);">Pictures</span>
<span class="t" style="left:429.8px;top:613px;font-size:12px;transform:scaleX(0.952);">This PC</span>
<span class="t" style="left:429.0px;top:645px;font-size:12px;transform:scaleX(1.040);">Network</span>
<div style="left:816px;top:463px;width:1px;height:25px;background:#e5e5e5;"></div>
<div style="left:936px;top:463px;width:1px;height:25px;background:#e5e5e5;"></div>
<div style="left:1056px;top:463px;width:1px;height:25px;background:#e5e5e5;"></div>
<div style="left:1136px;top:463px;width:1px;height:25px;background:#e5e5e5;"></div>
<span class="t" style="left:561.0px;top:470px;font-size:12px;color:#4c607a;transform:scaleX(1.026);">Name</span>
<svg style="left:682px;top:463px;" width="10" height="5" viewBox="0 0 10 5"><path d="M1.2 4.3L5 0.7L8.8 4.3" fill="none" stroke="#555" stroke-width="1.2"/></svg>
<span class="t" style="left:822.0px;top:470px;font-size:12px;color:#4c607a;transform:scaleX(1.038);">Date modified</span>
<span class="t" style="left:942.8px;top:470px;font-size:12px;color:#4c607a;transform:scaleX(0.970);">Type</span>
<span class="t" style="left:1063.4px;top:470px;font-size:12px;color:#4c607a;transform:scaleX(0.840);">Size</span>
<span class="t" style="left:583.0px;top:499px;font-size:12px;transform:scaleX(0.994);">AccessibilityInsights</span>
<span class="t" style="left:822.0px;top:499px;font-size:12px;color:#6d6d6d;transform:scaleX(0.990);">1/16/2023 5:38 AM</span>
<span class="t" style="left:942.0px;top:499px;font-size:12px;color:#6d6d6d;">File folder</span>
<span class="t" style="left:450.3px;top:798px;font-size:12px;transform:scaleX(0.976);">File name:</span>
<div style="left:510px;top:792px;width:814px;height:23px;background:#fff;border:1px solid #0078d7;box-sizing:border-box;"></div>
<div style="left:516px;top:796px;width:1px;height:15px;background:#000;"></div>
<svg style="left:1311px;top:801px;" width="9" height="6" viewBox="0 0 9 6"><path d="M0.5 0.5L4.5 4.5L8.5 0.5" fill="none" stroke="#444" stroke-width="1.1"/></svg>
<span class="t" style="left:437.5px;top:823px;font-size:12px;transform:scaleX(0.926);">Save as type:</span>
<div style="left:510px;top:817px;width:814px;height:23px;background:#e1e1e1;border:1px solid #adadad;box-sizing:border-box;"></div>
<span class="t" style="left:512.8px;top:823px;font-size:12px;">PDF Document (*.pdf)</span>
<svg style="left:1311px;top:826px;" width="9" height="6" viewBox="0 0 9 6"><path d="M0.5 0.5L4.5 4.5L8.5 0.5" fill="none" stroke="#444" stroke-width="1.1"/></svg>
<svg style="left:398px;top:873px;" width="10" height="7" viewBox="0 0 10 7"><path d="M1 5.5L5 1.5L9 5.5" fill="none" stroke="#444" stroke-width="1.8"/></svg>
<span class="t" style="left:414.3px;top:870px;font-size:12px;transform:scaleX(0.977);">Hide Folders</span>
<div style="left:1125px;top:861px;width:86px;height:24px;background:#e1e1e1;border:2px solid #0078d7;box-sizing:border-box;"></div>
<span class="t" style="left:1156.1px;top:867px;font-size:12px;transform:scaleX(0.888);">Save</span>
<div style="left:1225px;top:861px;width:86px;height:24px;background:#e1e1e1;border:1px solid #adadad;box-sizing:border-box;"></div>
<span class="t" style="left:1250.2px;top:867px;font-size:12px;transform:scaleX(0.981);">Cancel</span>
<svg style="left:1317px;top:888px;" width="10" height="10" viewBox="0 0 10 10"><g fill="#bcbcbc" shape-rendering="crispEdges"><rect x="7" y="0" width="2" height="2"/><rect x="4" y="3" width="2" height="2"/><rect x="7" y="3" width="2" height="2"/><rect x="1" y="6" width="2" height="2"/><rect x="4" y="6" width="2" height="2"/><rect x="7" y="6" width="2" height="2"/></g></svg>
</div></body></html>
